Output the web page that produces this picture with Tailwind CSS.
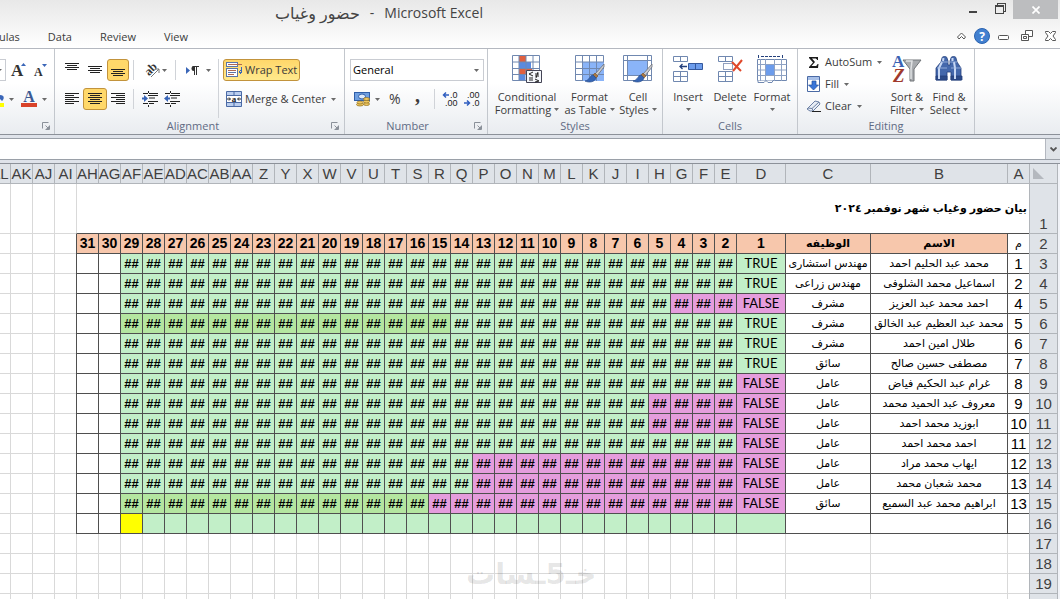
<!DOCTYPE html>
<html lang="en">
<head>
  <meta charset="UTF-8" />
  <meta name="viewport" content="width=device-width, initial-scale=1.0" />
  <title>حضور وغياب - Microsoft Excel</title>
  <script src="https://cdn.jsdelivr.net/npm/@tailwindcss/browser@4"></script>
</head>
<body class="flex h-screen flex-col overflow-hidden bg-white font-['Open_Sans','DejaVu_Sans',sans-serif] text-[11px] leading-4 text-[#3b3b3b]">

  <!-- Shared icons -->
  <svg class="hidden" aria-hidden="true">
    <symbol id="caret" viewBox="0 0 5 3"><path d="M0 0h5L2.500 3z" fill="#6a6a6a" /></symbol>
    <symbol id="launcher" viewBox="0 0 8 8"><path d="M.5 6.500v-6h6M3.500 3.500l3 3M7.500 3.500v4h-4" fill="none" stroke="#8a9099" /><path d="M7 4v3H4z" fill="#8a9099" /></symbol>
    <symbol id="brush" viewBox="0 0 20 20">
      <path d="M19 1 10 11l2 2 7-9z" fill="#c9ccd2" stroke="#6c7079" stroke-width=".8" />
      <path d="m10 10-2 2 3 3 2-2z" fill="#a87844" stroke="#75502a" stroke-width=".6" />
      <path d="M8 12c-3 0-3 5-8 6 4 2 10 1 11-3z" fill="#3565b5" stroke="#254a8a" stroke-width=".7" />
    </symbol>
  </svg>

  <!-- Title bar and tabs -->
  <header class="shrink-0 border-b border-[#b4b8c0] bg-linear-to-b from-[#e8e8e8] to-white">
    <div class="flex h-[26px] items-start">
      <h1 class="flex flex-1 items-center gap-[10px] pl-[275px] pt-[3px] text-sm leading-5 text-[#444]"><bdi class="text-base leading-5">حضور وغياب</bdi><span>-</span><span>Microsoft Excel</span></h1>
      <button aria-label="Minimize" class="flex h-[18px] w-[26px] items-center justify-center">
        <svg class="size-3" viewBox="0 0 12 12"><path d="M2 8h8v2H2z" fill="#444" /></svg>
      </button>
      <button aria-label="Restore" class="flex h-[18px] w-[27px] items-center justify-center">
        <svg class="size-3" viewBox="0 0 12 12" fill="none" stroke="#444" shape-rendering="crispEdges"><path d="M3.500 2V.5h8v8H10" /><path d="M1.500 3.500h8v7h-8z" /><path d="M1 3h9" stroke-width="2" /></svg>
      </button>
      <button aria-label="Close" class="mr-0.5 flex h-[19px] w-[45px] items-center justify-center bg-[#bcbdbf]">
        <svg class="size-2" viewBox="0 0 8 8" stroke="#fff" stroke-width="1.700"><path d="m.5.5 7 7m0-7-7 7" /></svg>
      </button>
    </div>
    <div class="flex h-[22px] items-center">
      <nav class="-ml-7 flex flex-1 gap-7">
        <a href="#">Formulas</a>
        <a href="#">Data</a>
        <a href="#">Review</a>
        <a href="#">View</a>
      </nav>
      <div class="flex items-center gap-3 pr-1 pb-0.5">
        <button aria-label="Minimize ribbon" class="-mr-1"><svg class="size-[9px]" viewBox="0 0 9 9" fill="#fff" stroke="#555"><path d="M.5 5 4.500 1l4 4-1.500 2-2.500-2.500L2 7z" /></svg></button>
        <button aria-label="Help"><svg class="size-4" viewBox="0 0 16 16"><circle cx="8" cy="8" r="7.500" fill="#4280d0" stroke="#2b63b0" /><text x="8" y="12.500" text-anchor="middle" font-family="Open Sans" font-size="12" font-weight="700" fill="#fff">?</text></svg></button>
        <button aria-label="Minimize window" class="-ml-1"><svg class="h-3 w-[11px]" viewBox="0 0 11 12"><rect x=".5" y="5.500" width="10" height="4" rx="1" fill="#fff" stroke="#555" /></svg></button>
        <button aria-label="Restore window"><svg class="size-3" viewBox="0 0 12 12" fill="#fff" stroke="#555"><path d="M4.500.5h7v6h-7z" /><path d="M.5 4.500h7v6h-7z" /><path d="M2.500 6.500h3v2h-3z" /></svg></button>
        <button aria-label="Close window"><svg class="h-3 w-[11px]" viewBox="0 0 11 12" fill="#fff" stroke="#555"><path d="M.5 1.500h3l2 2 2-2h3v1L8 6l2.500 3.500v1h-3l-2-2-2 2h-3v-1L3 6 .5 2.500z" /></svg></button>
      </div>
    </div>
  </header>

  <!-- Ribbon -->
  <div class="flex h-[86px] shrink-0 border-b border-[#8c9199] bg-linear-to-b from-white from-40% to-[#e9ecf0]">

    <section class="flex w-[55px] flex-col border-r border-[#c3c7cd]">
      <div class="flex flex-1 flex-col gap-[7px] pt-[10px]">
        <div class="flex h-[22px] items-center">
          <span class="flex h-[22px] w-[6px] items-center border border-l-0 border-[#c9ccd2] bg-white"><svg class="h-[3px] w-[2px]" viewBox="0 0 2 3"><path d="M0 0h2L0 2z" fill="#6a6a6a" /></svg></span>
          <button aria-label="Grow font" class="ml-[5px]"><svg class="h-4 w-[15px] overflow-visible" viewBox="0 0 15 16"><text x="0" y="14" font-family="Liberation Serif" font-size="17" font-weight="700" fill="#333">A</text><path d="M10 4h5l-2.500-3z" fill="#3a66b8" /></svg></button>
          <button aria-label="Shrink font" class="ml-2"><svg class="h-4 w-[13px] overflow-visible" viewBox="0 0 13 16"><text x="0" y="14" font-family="Liberation Serif" font-size="12" font-weight="700" fill="#333">A</text><path d="M8 2h5l-2.500 3z" fill="#3a66b8" /></svg></button>
        </div>
        <div class="flex h-[22px] items-center">
          <button aria-label="Fill color" class="flex items-center gap-[5px]"><svg class="h-4 w-1" viewBox="0 0 4 16"><path d="M0 4c4 0 5 3 2 6l-2-2z" fill="#3a66b8" /><path d="M0 12h4v4H0z" fill="#ff0" /></svg><svg class="h-[3px] w-[5px]"><use href="#caret" /></svg></button>
          <button aria-label="Font color" class="ml-[7px] flex items-center gap-[5px]"><svg class="size-4 overflow-visible" viewBox="0 0 16 16"><text x="8" y="11" text-anchor="middle" font-family="Liberation Serif" font-size="16" font-weight="700" fill="#3c5a94">A</text><path d="M0 12h16v4H0z" fill="#d9432a" /></svg><svg class="h-[3px] w-[5px]"><use href="#caret" /></svg></button>
        </div>
      </div>
      <div class="flex h-4 items-center justify-end pr-1"><svg class="size-2"><use href="#launcher" /></svg></div>
    </section>

    <section class="flex w-[290px] flex-col border-r border-[#c3c7cd]">
      <div class="flex flex-1 pt-[10px] pl-[6px]">
        <div class="flex w-[157px] shrink-0 flex-col gap-[7px]">
          <div class="flex h-[22px] items-center">
            <button aria-label="Top align" class="flex h-[22px] w-[22px] shrink-0 items-center justify-center"><svg class="size-4" viewBox="0 0 16 16" stroke="#222" shape-rendering="crispEdges"><path d="M1 1.500h14M3 3.500h10M1 5.500h14M3 7.500h10" /></svg></button>
            <button aria-label="Middle align" class="flex h-[22px] w-[24px] shrink-0 items-center justify-center"><svg class="size-4" viewBox="0 0 16 16" stroke="#222" shape-rendering="crispEdges"><path d="M1 4.500h14M3 6.500h10M1 8.500h14M3 10.500h10" /></svg></button>
            <button aria-label="Bottom align" class="flex h-[22px] w-[22px] shrink-0 items-center justify-center rounded-[3px] border border-[#c2933c] bg-[#ffd86a]"><svg class="size-4 shrink-0" viewBox="0 0 16 16" stroke="#222" shape-rendering="crispEdges"><path d="M1 7.500h14M3 9.500h10M1 11.500h14M3 13.500h10" /></svg></button>
            <span class="mx-1 h-5 w-px shrink-0 bg-[#d0d3d8]"></span>
            <button aria-label="Orientation" class="flex w-[34px] shrink-0 items-center justify-center gap-[2px]"><svg class="size-4 overflow-visible" viewBox="0 0 16 16"><text x="1" y="11" transform="rotate(-45 7 8)" font-family="Liberation Serif" font-size="12" font-weight="700" fill="#333">ab</text><path d="m7 15 8-8m-4 0h4v4" fill="none" stroke="#777" /></svg><svg class="h-[3px] w-[5px]"><use href="#caret" /></svg></button>
            <span class="mx-[3px] h-5 w-px shrink-0 bg-[#d0d3d8]"></span>
            <button aria-label="Text direction" class="flex w-[39px] shrink-0 items-center justify-center gap-[7px]"><svg class="h-4 w-[13px]" viewBox="0 0 13 16"><path d="M0 5v7l4-3.500z" fill="#3a66b8" /><path d="M8.500 4v9M10.500 4v9M6.500 4.500H13" stroke="#333" /><path d="M8.500 4H8a2.500 2.500 0 0 0 0 5h.5z" fill="#333" /></svg><svg class="h-[3px] w-[5px]"><use href="#caret" /></svg></button>
          </div>
          <div class="flex h-[22px] items-center">
            <button aria-label="Align left" class="flex h-[22px] w-[22px] items-center justify-center"><svg class="size-4" viewBox="0 0 16 16" stroke="#222" shape-rendering="crispEdges"><path d="M1 2.500h14M1 4.500h9M1 6.500h14M1 8.500h9M1 10.500h14M1 12.500h9" /></svg></button>
            <button aria-label="Center" class="flex h-[22px] w-[24px] items-center justify-center rounded-[3px] border border-[#c2933c] bg-[#ffd86a]"><svg class="size-4" viewBox="0 0 16 16" stroke="#222" shape-rendering="crispEdges"><path d="M1 2.500h14M3 4.500h10M1 6.500h14M3 8.500h10M1 10.500h14M3 12.500h10" /></svg></button>
            <button aria-label="Align right" class="flex h-[22px] w-[22px] items-center justify-center"><svg class="size-4" viewBox="0 0 16 16" stroke="#222" shape-rendering="crispEdges"><path d="M1 2.500h14M6 4.500h9M1 6.500h14M6 8.500h9M1 10.500h14M6 12.500h9" /></svg></button>
            <span class="mx-1 h-5 w-px bg-[#d0d3d8]"></span>
            <button aria-label="Decrease indent" class="flex w-[20px] justify-end"><svg class="size-4" viewBox="0 0 16 16"><path d="M0 6.500h2V4l4 3.500L2 11V8.500H0z" fill="#3a66b8" /><path d="M1 2.500h5m1 0h9M7 4.500h9M7 7h6M7 10.500h9M1 12.500h5m1 0h5" stroke="#222" /><path d="M6.500 0v2m0 2v1m0 5v1m0 3v2" stroke="#222" /></svg></button>
            <button aria-label="Increase indent" class="flex w-[22px] justify-end"><svg class="size-4" viewBox="0 0 16 16"><path d="M6 6.500H4V4L0 7.500 4 11V8.500h2z" fill="#3a66b8" /><path d="M1 2.500h5m1 0h9M7 4.500h9M7 7h6M7 10.500h9M1 12.500h5m1 0h5" stroke="#222" /><path d="M6.500 0v2m0 2v1m0 5v1m0 3v2" stroke="#222" /></svg></button>
          </div>
        </div>
        <div class="flex flex-col items-start gap-[7px] border-l border-[#d0d3d8] pl-1">
          <button class="flex h-[22px] items-center gap-[2px] rounded-[3px] border border-[#c2933c] bg-linear-to-b from-[#ffd76a] to-[#ffe98c] px-[2px]">
            <svg class="h-4 w-[17px]" viewBox="0 0 17 16" fill="#fff" stroke="#5a76a8" shape-rendering="crispEdges"><path d="M.5.500h11v4H.5zM.5 6.500h11v8H.5z" /><path d="M2 2.500h14M2 8.500h8M2 12.500h6" stroke="#b06a50" /><path d="M2 10.500h8" stroke="#5a76a8" /><path d="M15.500 5v5H13m2-2-2 2 2 2" fill="none" stroke="#3a66b8" /></svg>
            Wrap Text
          </button>
          <button class="flex h-[22px] items-center gap-[3px] pl-[3px]">
            <svg class="size-4" viewBox="0 0 16 16"><path d="M.5.500h15v15H.5z" fill="#b9cdee" stroke="#4a6aa5" /><path d="M0 4.500h16M0 11.500h16M8 0v4m0 8v4" stroke="#4a6aa5" /><path d="M1 5h14v6H1z" fill="#fff" /><path d="M1 8h3m8 0h3M3 6.500 4.500 8 3 9.500M13 6.500 11.500 8 13 9.500" fill="none" stroke="#222" /><text x="8" y="11" text-anchor="middle" font-family="Liberation Serif" font-size="9" font-weight="700" fill="#222">a</text></svg>
            Merge &amp; Center
            <svg class="ml-[2px] h-[3px] w-[5px]"><use href="#caret" /></svg>
          </button>
        </div>
      </div>
      <div class="flex h-4 items-center pr-[5px]"><h2 class="flex-1 text-center text-[#5f6b84]">Alignment</h2><svg class="size-2"><use href="#launcher" /></svg></div>
    </section>

    <section class="flex w-[143px] flex-col border-r border-[#c3c7cd]">
      <div class="flex flex-1 flex-col gap-[7px] pr-[3px] pt-[10px] pl-[5px]">
        <div class="flex h-[22px] items-center border border-[#c9ccd2] bg-white pr-1">
          <select aria-label="Number format" class="flex-1 appearance-none pl-[2px] text-black outline-none"><option>General</option></select>
          <svg class="h-[3px] w-[5px]"><use href="#caret" /></svg>
        </div>
        <div class="flex h-[22px] items-center">
          <button aria-label="Accounting format" class="ml-1 flex items-center gap-[5px]"><svg class="size-4" viewBox="0 0 16 16"><path d="M0 1h16v9H0z" fill="#2f5ea8" /><path d="M1 2h14v7H1z" fill="#6f9fe0" /><ellipse cx="8" cy="5.500" rx="3.500" ry="2.500" fill="#dce9fa" stroke="#2f5ea8" /><g fill="#f0c860" stroke="#8a6a1c" stroke-width=".7"><ellipse cx="12.500" cy="13" rx="3" ry="1.500" /><ellipse cx="12.500" cy="10.500" rx="3" ry="1.500" /><ellipse cx="12.500" cy="8" rx="3" ry="1.500" /><ellipse cx="6" cy="13.500" rx="3.500" ry="1.500" /><ellipse cx="6" cy="11.500" rx="3" ry="1.500" /></g></svg><svg class="h-[3px] w-[5px]"><use href="#caret" /></svg></button>
          <button class="ml-[9px] text-sm">%</button>
          <button class="ml-[13px] w-2 pb-2 font-['Liberation_Serif',serif] text-xl leading-4 font-bold">,</button>
          <span class="mr-[7px] ml-[12px] h-5 w-px bg-[#d0d3d8]"></span>
          <button aria-label="Increase decimal"><svg class="size-4 overflow-visible" viewBox="0 0 16 16" font-family="Liberation Sans" font-size="9" fill="#222"><text x="8" y="7">.0</text><text x="3" y="15">.00</text><path d="M7 4H2m2-2.500L1.500 4 4 6.500" fill="none" stroke="#2f5ec0" stroke-width="1.500" /></svg></button>
          <button aria-label="Decrease decimal" class="ml-[6px]"><svg class="size-4 overflow-visible" viewBox="0 0 16 16" font-family="Liberation Sans" font-size="9" fill="#222"><text x="3" y="7">.00</text><text x="8" y="15">.0</text><path d="M0 12h5M3 9.500 5.500 12 3 14.500" fill="none" stroke="#2f5ec0" stroke-width="1.500" /></svg></button>
        </div>
      </div>
      <div class="flex h-4 items-center pr-[5px]"><h2 class="flex-1 pr-1 text-center text-[#5f6b84]">Number</h2><svg class="size-2"><use href="#launcher" /></svg></div>
    </section>

    <section class="flex w-[175px] flex-col border-r border-[#c3c7cd]">
      <div class="flex flex-1 pt-[6px] pl-1">
        <button class="flex w-[70px] flex-col items-center leading-[13px]">
          <svg class="mb-[5px] size-[30px]" viewBox="0 0 30 30"><path d="M.5.500h27v25H.5z" fill="#fff" stroke="#7088b0" /><path d="M7 1h7v7H7zM7 14h13v6H7z" fill="#e0603f" /><path d="M7 7h12v6H7zM7 20h6v5H7z" fill="#5a8ae0" /><path d="M0 7h28M0 13.500h28M0 19.500h28M7 0v26M14 0v26M21 0v26" stroke="#7088b0" fill="none" /><path d="M14.500 15.500h15v12h-15z" fill="#f4f7fb" stroke="#445" /><path d="m21 17-4 2 4 2m-4 2h4m-4 2h4m2-6h4m-4 2h4m-1-4-2 6m-1 1 4 2-4 1" fill="none" stroke="#222" /></svg>
          <span>Conditional</span>
          <span class="flex items-center gap-[3px]">Formatting<svg class="h-[3px] w-[5px]"><use href="#caret" /></svg></span>
        </button>
        <button class="flex w-[55px] flex-col items-center leading-[13px]">
          <svg class="mb-[5px] size-[30px]" viewBox="0 0 30 30"><path d="M.5.500h28v25H.5z" fill="#fff" stroke="#7088b0" /><path d="M8 7h21v19H8z" fill="#8ab4f8" /><path d="M0 7h29M0 13.500h29M0 19.500h29M7.500 0v26M14.500 0v26M21.500 0v26" stroke="#7088b0" fill="none" /><use href="#brush" x="10" y="8" width="20" height="20" /></svg>
          <span>Format</span>
          <span class="flex items-center gap-[3px] whitespace-nowrap">as Table<svg class="h-[3px] w-[5px]"><use href="#caret" /></svg></span>
        </button>
        <button class="flex w-[42px] flex-col items-center leading-[13px]">
          <svg class="mb-[5px] size-[30px]" viewBox="0 0 30 30"><path d="M.5.500h28v25H.5z" fill="#fff" stroke="#7088b0" /><path d="M5 6h19v14H5z" fill="#8ab4f8" /><path d="M0 5.500h29M0 20.500h29M4.500 0v26M24.500 0v26" stroke="#7088b0" fill="none" /><use href="#brush" x="10" y="8" width="20" height="20" /></svg>
          <span>Cell</span>
          <span class="flex items-center gap-[3px]">Styles<svg class="h-[3px] w-[5px]"><use href="#caret" /></svg></span>
        </button>
      </div>
      <h2 class="h-4 text-center text-[#5f6b84]">Styles</h2>
    </section>

    <section class="flex w-[135px] flex-col border-r border-[#c3c7cd]">
      <div class="flex flex-1 pt-[6px] pl-1">
        <button class="flex w-[42px] flex-col items-center leading-[13px]">
          <svg class="mb-[5px] size-[30px]" viewBox="0 0 30 30" stroke="#7088b0" fill="#fff"><path d="M.5 1.500h14v5H.5zM7.500 1.500v5M.5 16.500h14v10H.5zM7.500 16.500v10M.5 21.500h14" /><path d="M15.500 8.500h14v6h-14z" fill="#6c9cec" stroke="#35589c" /><path d="M22.500 8.500v6" stroke="#35589c" /><path d="M14 11.500H7M9.500 9 7 11.500 9.500 14" fill="none" stroke="#24407c" stroke-width="1.300" /></svg>
          <span>Insert</span>
          <svg class="mt-[5px] h-[3px] w-[5px]"><use href="#caret" /></svg>
        </button>
        <button class="flex w-[42px] flex-col items-center leading-[13px]">
          <svg class="mb-[5px] size-[30px]" viewBox="0 0 30 30" stroke="#7088b0" fill="#fff"><path d="M3.500 1.500h14v5h-14zM10.500 1.500v5M3.500 16.500h14v10h-14zM10.500 16.500v10M3.500 21.500h14" /><path d="M8.500 8.500h9v6h-9z" stroke="#24407c" stroke-dasharray="1 1" /><path d="m17 7 9 9m1-11-9 11" stroke="#e0482a" stroke-width="2" /></svg>
          <span>Delete</span>
          <svg class="mt-[5px] h-[3px] w-[5px]"><use href="#caret" /></svg>
        </button>
        <button class="flex w-[42px] flex-col items-center leading-[13px]">
          <svg class="mb-[5px] size-[30px]" viewBox="0 0 30 30" stroke="#7088b0" fill="#fff"><path d="M.5 4.500h29v21H.5z" /><path d="M1 25.500v2h6l2-2 2 2h4l1-2" /><path d="M9 10h9v10H9z" fill="#6c9cec" stroke="none" /><path d="M.5 9.500h29M.5 20.500h29M3.500 4v22M8.500 4v22M17.500 4v22M24.500 4v22M.5 15H8m10 0h11" fill="none" stroke="#8ea2c4" /><path d="M1.500 0v3m24-3v3M4 1.500h19" stroke="#24407c" stroke-dasharray="3 1" /></svg>
          <span>Format</span>
          <svg class="mt-[5px] h-[3px] w-[5px]"><use href="#caret" /></svg>
        </button>
      </div>
      <h2 class="h-4 text-center text-[#5f6b84]">Cells</h2>
    </section>

    <section class="flex w-[177px] flex-col border-r border-[#c3c7cd]">
      <div class="flex flex-1 pl-2">
        <div class="flex w-[80px] flex-col pt-[2px]">
          <button class="flex h-[22px] items-center gap-[3px] whitespace-nowrap"><svg class="size-4 shrink-0" viewBox="0 0 16 16"><path d="M3 3h9v3h-1c0-1-1-1.500-2-1.500H6l3 3.500-3.500 4H9c1.500 0 2-.5 2.500-2h1L12 14H3v-1l4-4.500L3 4z" fill="#1c1c1c" /></svg>AutoSum<svg class="ml-[2px] h-[3px] w-[5px] shrink-0"><use href="#caret" /></svg></button>
          <button class="flex h-[22px] items-center gap-[3px]"><svg class="size-4" viewBox="0 0 16 16"><path d="M1.500.500h12v15h-12z" fill="#fff" stroke="#4a6aa5" /><path d="M2 1h11v3H2z" fill="#a8c0e8" /><path d="M6 5h4v4h2.500l-5 5-5-5H6z" fill="#3a76d8" stroke="#24509c" stroke-width=".7" /></svg>Fill<svg class="ml-[2px] h-[3px] w-[5px]"><use href="#caret" /></svg></button>
          <button class="flex h-[22px] items-center gap-[3px]"><svg class="size-4" viewBox="0 0 16 16"><path d="m2 10 7-7 4 1 1 2-7 7H4l-3-2z" fill="#e8edf5" stroke="#6c80a4" /><path d="m2 10 4 .5 7-6.500M6 10.500l1 2" fill="none" stroke="#6c80a4" /><path d="M6 13.500h9" stroke="#222" /></svg>Clear<svg class="ml-[2px] h-[3px] w-[5px]"><use href="#caret" /></svg></button>
        </div>
        <button class="flex w-[42px] flex-col items-center pt-[6px] leading-[13px]">
          <svg class="mb-[5px] size-[30px] overflow-visible" viewBox="0 0 30 30"><text x="0" y="12" font-family="Liberation Serif" font-size="17" font-weight="700" fill="#3a62b4">A</text><text x="1" y="27" font-family="Liberation Serif" font-size="19" font-weight="700" font-style="italic" fill="#a0392c">Z</text><path d="M11 5h18l-7 9v12h-4V14z" fill="#a9acb0" stroke="#707478" /><path d="M14 6h6l-1 8v10" fill="none" stroke="#e0e2e4" stroke-width="1.500" /></svg>
          <span>Sort &amp;</span>
          <span class="flex items-center gap-[3px]">Filter<svg class="h-[3px] w-[5px]"><use href="#caret" /></svg></span>
        </button>
        <button class="flex w-[42px] flex-col items-center pt-[6px] leading-[13px]">
          <svg class="mb-[5px] size-[30px]" viewBox="0 0 30 30" fill="#4468ac" stroke="#24407c" stroke-width=".8"><path d="M8 3c0-2 5-2 5 0l1 3v4h2V6l1-3c0-2 5-2 5 0l1 4 4 6v12H17v-8h-4v8H2V13l5-6z" /><path d="M2 21h11v4H2zM17 21h11v4H17z" fill="#2c4a88" /><path d="M8 7 5 13v11M20 7l1 6v11M9.500 3 9 6M18.500 3v3" fill="none" stroke="#c8d8f4" stroke-width="2" /><path d="M3 13h10m4 0h10M7 7h7m2 0h7" stroke="#a4bce4" /></svg>
          <span class="whitespace-nowrap">Find &amp;</span>
          <span class="flex items-center gap-[3px]">Select<svg class="h-[3px] w-[5px]"><use href="#caret" /></svg></span>
        </button>
      </div>
      <h2 class="h-4 text-center text-[#5f6b84]">Editing</h2>
    </section>
  </div>

  <!-- Formula bar -->
  <div class="shrink-0 border-b border-[#8c9199] bg-[#dfe3ea] py-[3px]">
    <div class="flex h-[22px] border-y border-[#9aa0a8] bg-white">
      <input type="text" aria-label="Formula" class="min-w-0 flex-1 px-2 outline-none" />
      <button aria-label="Expand formula bar" class="flex w-[15px] items-center justify-center border-l border-[#b4b8c0] bg-[#dfe3e8]"><svg class="h-[5px] w-[7px]" viewBox="0 0 7 5"><path d="m.5.500 3 3 3-3" fill="none" stroke="#555" stroke-width="1.800" /></svg></button>
    </div>
  </div>

  <!-- Worksheet -->
  <main dir="rtl" class="relative min-h-0 flex-1 overflow-hidden bg-[#f1f3f8] pr-[2px]">
    <table class="w-[1070px] table-fixed border-separate border-spacing-0 bg-white font-['Liberation_Sans','DejaVu_Sans',sans-serif] text-[15px] leading-[19px] text-black">
      <colgroup id="cols"></colgroup>
      <thead><tr id="letters"></tr></thead>
      <tbody id="rows"></tbody>
    </table>
    <div class="absolute top-[388px] left-[466px] font-['DejaVu_Sans',sans-serif] text-[29px] leading-[44px] font-bold text-black/10">خـ5ـسات</div>
  </main>

  <script>
    const letters = ['A', 'B', 'C', 'D', 'E', 'F', 'G', 'H', 'I', 'J', 'K', 'L', 'M', 'N', 'O', 'P', 'Q', 'R', 'S', 'T', 'U', 'V', 'W', 'X', 'Y', 'Z',
      'AA', 'AB', 'AC', 'AD', 'AE', 'AF', 'AG', 'AH', 'AI', 'AJ', 'AK', 'AL'];

    // absent: last day marked FALSE, marked: first day of the darker band
    const people = [
      { no: 1, name: 'محمد عبد الحليم احمد', job: 'مهندس استشارى', absent: 0 },
      { no: 2, name: 'اسماعيل محمد الشلوفى', job: 'مهندس زراعى', absent: 0 },
      { no: 4, name: 'احمد محمد عبد العزيز', job: 'مشرف', absent: 4 },
      { no: 5, name: 'محمد عبد العظيم عبد الخالق', job: 'مشرف', absent: 0, marked: 15 },
      { no: 6, name: 'طلال امين احمد', job: 'مشرف', absent: 0 },
      { no: 7, name: 'مصطفى حسين صالح', job: 'سائق', absent: 0 },
      { no: 8, name: 'غرام عبد الحكيم فياض', job: 'عامل', absent: 1 },
      { no: 9, name: 'معروف عبد الحميد محمد', job: 'عامل', absent: 5 },
      { no: 10, name: 'ابوزيد محمد احمد', job: 'عامل', absent: 5 },
      { no: 11, name: 'احمد محمد احمد', job: 'عامل', absent: 1 },
      { no: 12, name: 'ايهاب محمد مراد', job: 'عامل', absent: 13 },
      { no: 13, name: 'محمد شعبان محمد', job: 'عامل', absent: 13 },
      { no: 13, name: 'ابراهيم محمد عبد السميع', job: 'سائق', absent: 15, marked: 16 }
    ];

    const head = 'h-5 border-x border-b border-[#b1b5ba] bg-[#dfe3e8] p-0 text-center font-normal text-[#3f3f3f]';
    const dark = 'h-5 whitespace-nowrap border-l border-b border-[#4f4f4f] p-0 text-center';
    const plain = 'h-5 border-l border-b border-[#d9d9d9] p-0';

    const widths = [29, 22, 137, 85, 49];
    for (let i = 0; i < 39; i++) {
      document.getElementById('cols').innerHTML += `<col style="width:${widths[i] || 22}px">`;
    }

    document.getElementById('letters').innerHTML =
      `<th class="${head}"><svg class="mr-[13px] size-[11px]" viewBox="0 0 11 11"><path d="M0 0v11h11z" fill="#b4b8be" /></svg></th>` +
      letters.map(l => `<th scope="col" class="h-5 border-l border-b border-[#b1b5ba] bg-[#dfe3e8] p-0 font-normal text-[#3f3f3f]"><span class="flex justify-center">${l}</span></th>`).join('');

    function rowHead(n) {
      return `<th scope="row" class="border-x border-b border-[#b1b5ba] bg-[#dfe3e8] p-0 text-center align-bottom font-normal text-[#3f3f3f]">${n}</th>`;
    }
    function blanks(n) {
      return `<td class="${plain}"></td>`.repeat(n);
    }
    function dayCell(day, p) {
      if (day > 29) return `<td class="${dark}"></td>`;
      const color = day <= p.absent ? 'bg-[#e59ddd]' : day >= p.marked ? 'bg-[#b4e6a0]' : 'bg-[#c2efc8]';
      if (day === 1) return `<td class="${dark} ${color} font-['Lato',sans-serif] text-[13px] leading-[19px]">${p.absent ? 'FALSE' : 'TRUE'}</td>`;
      return `<td class="${dark} ${color} text-[13px] leading-[19px] font-bold">##</td>`;
    }

    const days = Array.from({ length: 31 }, (_, i) => i + 1);
    let html = `<tr class="h-[50px]">${rowHead(1)}<td colspan="34" class="border-b border-l border-b-[#4f4f4f] border-l-[#d9d9d9] px-[2px] py-0 text-right text-[11px] font-bold">بيان حضور وغياب شهر نوفمبر ٢٠٢٤</td>${blanks(4)}</tr>`;

    html += `<tr>${rowHead(2)}<td class="${dark} text-[11px] leading-[19px]">م</td>` +
      `<td class="${dark} bg-[#f7c7ac] text-[11px] leading-[19px] font-bold">الاسم</td><td class="${dark} bg-[#f7c7ac] text-[11px] leading-[19px] font-bold">الوظيفه</td>` +
      days.map(d => `<td class="${dark} bg-[#f7c7ac] text-sm leading-[19px] font-bold">${d}</td>`).join('') + blanks(4) + '</tr>';

    people.forEach((p, i) => {
      html += `<tr>${rowHead(i + 3)}<td class="${dark}">${p.no}</td><td class="${dark} text-[11px] leading-[19px]">${p.name}</td><td class="${dark} text-[11px] leading-[19px]">${p.job}</td>` +
        days.map(d => dayCell(d, p)).join('') + blanks(4) + '</tr>';
    });

    html += `<tr>${rowHead(16)}` + `<td class="${dark}"></td>`.repeat(3) +
      days.map(d => `<td class="${dark} ${d === 29 ? 'bg-[#ffff00]' : d < 29 ? 'bg-[#c2efc8]' : ''}"></td>`).join('') + blanks(4) + '</tr>';

    for (let n = 17; n <= 20; n++) html += `<tr>${rowHead(n)}${blanks(38)}</tr>`;
    document.getElementById('rows').innerHTML = html;
  </script>
</body>
</html>
